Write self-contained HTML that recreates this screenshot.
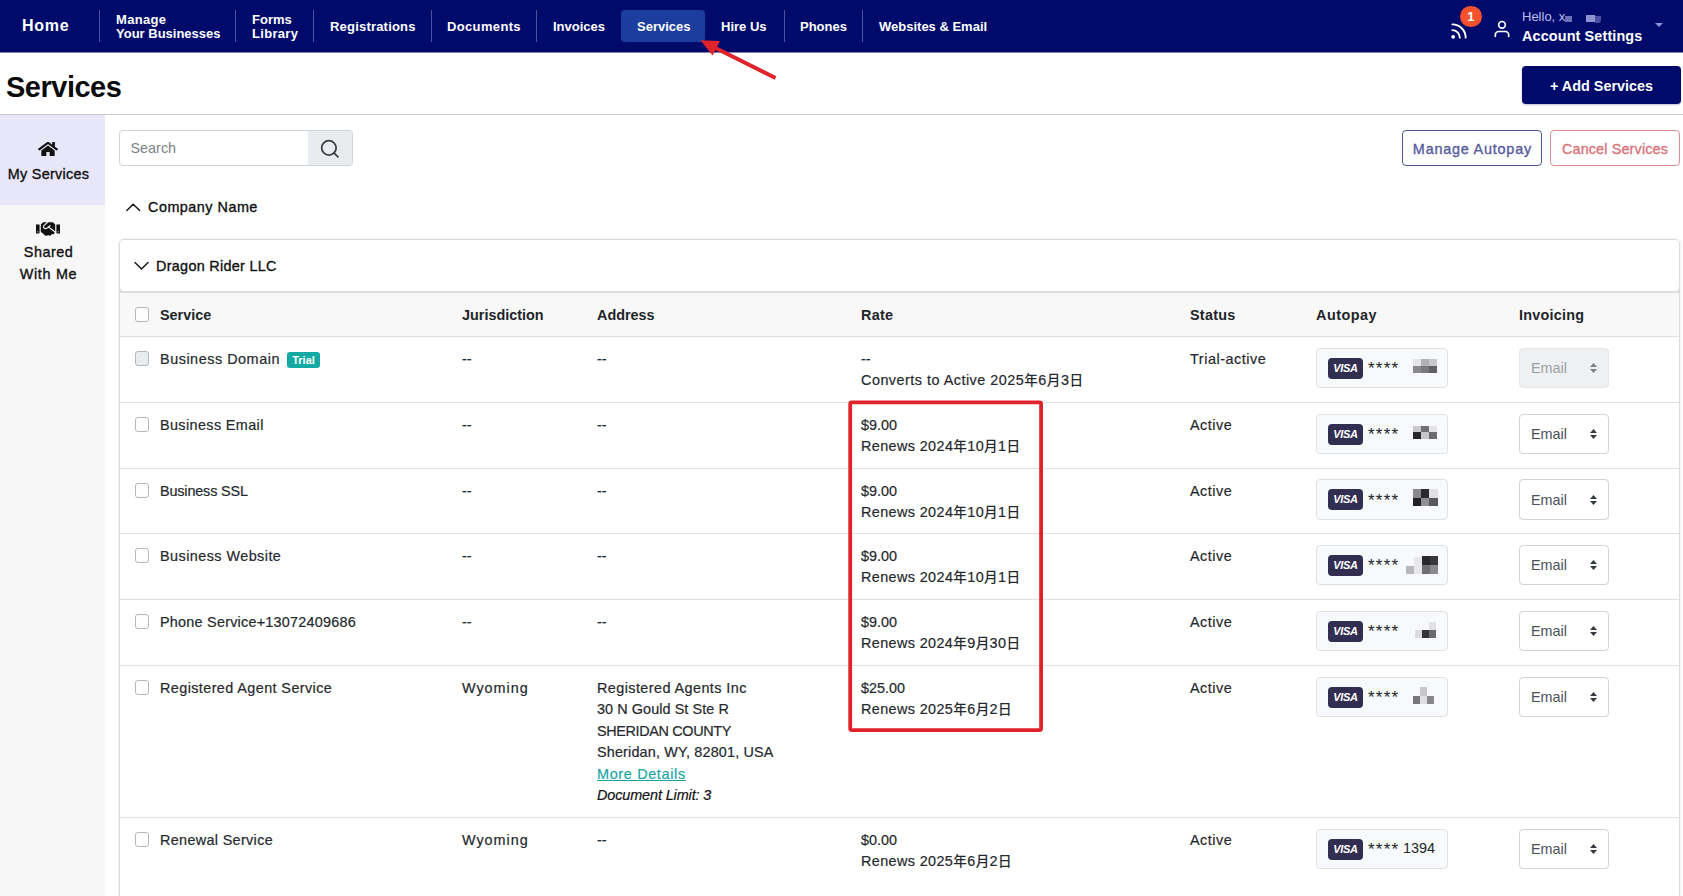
<!DOCTYPE html>
<html lang="en">
<head>
<meta charset="utf-8">
<title>Services</title>
<style>
*{box-sizing:border-box}
html,body{margin:0;padding:0}
body{width:1683px;height:896px;overflow:hidden;position:relative;background:#fff;color:#212529;
  font-family:"Liberation Sans","Noto Sans CJK SC",sans-serif;font-size:14.4px;line-height:21.6px}
.abs{position:absolute}
/* ---------- top nav ---------- */
#nav{position:absolute;left:0;top:0;width:1683px;height:52px;background:#000a6b;color:#fff}
#navedge{position:absolute;left:0;top:52px;width:1683px;height:1px;background:#7f84b5}
#nav .it{position:absolute;top:1px;height:52px;font-weight:700;font-size:13px;line-height:14px;white-space:nowrap;display:flex;align-items:center}
#nav .dv{position:absolute;top:10px;width:1px;height:32px;background:#4b53a6}
#nav .pill{position:absolute;left:621px;top:10px;width:84px;height:32px;border-radius:4px;background:#1b3d9d}
/* ---------- page head ---------- */
#h1{position:absolute;left:6px;top:67px;letter-spacing:-.5px;font-size:29px;line-height:40px;font-weight:700;color:#0b0b0b;margin:0;white-space:nowrap}
#addbtn{position:absolute;left:1522px;top:66px;width:159px;height:38px;border-radius:4px;background:#000a6b;color:#fff;font-weight:700;font-size:14.4px;line-height:40px;text-align:center;box-shadow:0 1px 2px rgba(0,10,107,.25)}
#hr{position:absolute;left:0;top:114px;width:1683px;height:1px;background:#c9c9c9}
/* ---------- sidebar ---------- */
#side{position:absolute;left:0;top:115px;width:105px;height:781px;background:#f7f7f7}
#side .act{position:absolute;left:0;top:0;width:105px;height:90px;background:#e8e7fa}
#side .lbl{position:absolute;left:0;width:97px;text-align:center;font-size:14.4px;line-height:22px;color:#111;white-space:nowrap;-webkit-text-stroke-width:.35px}
/* ---------- toolbar ---------- */
#search{position:absolute;left:119px;top:130px;width:234px;height:36px;border:1px solid #ced4da;border-radius:4px;background:#fff;overflow:hidden}
#search .ph{position:absolute;left:10.500px;top:7px;color:#7b838a;font-size:14.4px;line-height:21.6px}
#search .btn{position:absolute;left:188px;top:0;width:45px;height:34px;background:#e9ecef}
.obtn{position:absolute;top:130px;height:36px;border-radius:4px;border:1px solid;background:#fff;font-size:14.4px;line-height:36px;text-align:center;white-space:nowrap;-webkit-text-stroke-width:.35px}

/* ---------- company name / card ---------- */
#coname{position:absolute;left:148px;top:197px;font-size:14.4px;line-height:21.6px;color:#111;white-space:nowrap;letter-spacing:.49px;-webkit-text-stroke-width:.35px}
#card{position:absolute;left:119px;top:239px;width:1561px;height:700px;border:1px solid #dcdcdc;border-radius:5px;background:#fff;box-shadow:0 0 3px rgba(0,0,0,.12)}
#card .cname{position:absolute;left:36px;top:15px;font-size:14.4px;line-height:22px;color:#111;white-space:nowrap;letter-spacing:.3px;-webkit-text-stroke-width:.35px}
#card .hb{position:absolute;left:0;top:46px;width:1559px;height:7px;background:#dcdcdc}
#card .chead{position:absolute;left:0;top:0;width:1559px;height:51px;background:#fff;border-radius:4px}
#card .thead{position:absolute;left:0;top:53px;width:1559px;height:43px;background:#f8f8f8}
#card .ln{position:absolute;left:0;width:1559px;height:1px;background:#dfe2e5}
#card .c{position:absolute;white-space:nowrap;color:#25292d;font-size:14.4px;line-height:21.6px;-webkit-text-stroke-width:.2px}
#card .th{font-weight:700;color:#212529;letter-spacing:0;-webkit-text-stroke:0}
#card .c a{color:#17a6a3;text-decoration:underline}
#card .c .cj{font-size:13.6px;font-weight:500;-webkit-text-stroke-width:0}
#card .c em{font-style:italic;color:#111}
.cb{position:absolute;width:14px;height:15px;border:1px solid #b3b8be;border-radius:3px;background:#fff}
.cb.dis{background:#e9ecef}
.trial{position:absolute;width:33px;height:16px;border-radius:3px;background:#14a9a3;color:#fff;font-weight:700;font-size:11px;line-height:16px;text-align:center}
.ap{position:absolute;left:1196px;width:132px;height:40px;border:1px solid #dee2e6;border-radius:4px;background:#f8f9fa}
.ap .visa{position:absolute;left:11px;top:9px;width:35px;height:21px;border-radius:4px;background:#322e52;color:#fff;font-weight:700;font-style:italic;font-size:11px;line-height:21px;text-align:center;letter-spacing:-.3px}
.ap .stars{position:absolute;left:51px;top:9px;font-size:17px;line-height:22px;color:#212529;letter-spacing:1.25px}
.ap .dg{position:absolute;left:86px;top:8px;font-size:14.4px;line-height:21.6px;color:#212529}
.ap i{position:absolute;display:block}
.sel{position:absolute;left:1399px;width:90px;height:40px;border:1px solid #ced4da;border-radius:4px;background:#fff;color:#495057}
.sel span{position:absolute;left:11px;top:9px;font-size:14.4px;line-height:21.6px}
.sel svg{position:absolute;left:70px;top:14px;fill:#343a40}
.sel.tall span{top:10px}
.sel.tall svg{top:15px}
.sel.dis{background:#eff0f2;color:#9aa0a6;border-color:#e4e6e9}
.sel.dis svg{fill:#7a8188}
</style>
</head>
<body>

<!-- ================= NAV ================= -->
<div id="nav">
  <div class="it" style="left:22px;top:0;font-size:16px;letter-spacing:.7px">Home</div>
  <div class="dv" style="left:99px"></div>
  <div class="it" style="left:116px"><span><span style="letter-spacing:.3px">Manage</span><br>Your Businesses</span></div>
  <div class="dv" style="left:235px"></div>
  <div class="it" style="left:252px"><span>Forms<br><span style="letter-spacing:.3px">Library</span></span></div>
  <div class="dv" style="left:313px"></div>
  <div class="it" style="left:330px;letter-spacing:.2px">Registrations</div>
  <div class="dv" style="left:431px"></div>
  <div class="it" style="left:447px;letter-spacing:.35px">Documents</div>
  <div class="dv" style="left:536px"></div>
  <div class="it" style="left:553px">Invoices</div>
  <div class="pill"></div>
  <div class="it" style="left:637px">Services</div>
  <div class="it" style="left:721px">Hire Us</div>
  <div class="dv" style="left:784px"></div>
  <div class="it" style="left:800px">Phones</div>
  <div class="dv" style="left:862px"></div>
  <div class="it" style="left:879px">Websites &amp; Email</div>

  <svg class="abs" style="left:1449px;top:21px" width="20" height="20" viewBox="0 0 24 24" fill="none" stroke="#fff" stroke-width="2.2" stroke-linecap="round" stroke-linejoin="round"><path d="M4 11a9 9 0 0 1 9 9"/><path d="M4 4a16 16 0 0 1 16 16"/><circle cx="5" cy="19" r="1.2" fill="#fff"/></svg>
  <div class="abs" style="left:1460px;top:5.5px;width:21.5px;height:21.5px;border-radius:50%;background:#f4512c;color:#fff;font-weight:700;font-size:13px;line-height:21px;text-align:center">1</div>
  <svg class="abs" style="left:1492px;top:19px" width="20" height="20" viewBox="0 0 24 24" fill="none" stroke="#fff" stroke-width="2" stroke-linecap="round" stroke-linejoin="round"><path d="M20 21v-2a4 4 0 0 0-4-4H8a4 4 0 0 0-4 4v2"/><circle cx="12" cy="7" r="4"/></svg>
  <div class="abs" style="left:1522px;top:9px;font-size:13px;line-height:16px;color:#b9bdf0;white-space:nowrap">Hello, x</div>
  <div class="abs" style="left:1565px;top:16px;width:7px;height:6px;background:#6a70b8"></div>
  <div class="abs" style="left:1586px;top:15px;width:9px;height:7px;background:#8f94d0"></div>
  <div class="abs" style="left:1595px;top:16px;width:6px;height:7px;background:#4a50a0;border-radius:0 0 3px 1px"></div>
  <div class="abs" style="left:1522px;top:27px;font-size:14.4px;line-height:18px;font-weight:700;color:#fff;white-space:nowrap;letter-spacing:.13px">Account Settings</div>
  <div class="abs" style="left:1655px;top:23px;width:0;height:0;border-left:4px solid transparent;border-right:4px solid transparent;border-top:4px solid #8d93da"></div>
</div>
<div id="navedge"></div>

<!-- ================= PAGE HEAD ================= -->
<h1 id="h1">Services</h1>
<div id="addbtn">+ Add Services</div>
<div id="hr"></div>

<!-- ================= SIDEBAR ================= -->
<div id="side">
  <div class="act"></div>

  <svg class="abs" style="left:38px;top:26px" width="20" height="16" viewBox="0 0 576 512" preserveAspectRatio="none"><path fill="#111" d="M280.37 148.26L96 300.11V464a16 16 0 0 0 16 16l112.06-.29a16 16 0 0 0 15.92-16V368a16 16 0 0 1 16-16h64a16 16 0 0 1 16 16v95.640a16 16 0 0 0 16 16.050L464 480a16 16 0 0 0 16-16V300L295.670 148.260a12.190 12.190 0 0 0-15.300 0zM571.600 251.470L488 182.560V44.050a12 12 0 0 0-12-12h-56a12 12 0 0 0-12 12v72.610L318.470 43a48 48 0 0 0-61 0L4.340 251.470a12 12 0 0 0-1.600 16.900l25.500 31A12 12 0 0 0 45.150 301l235.220-193.740a12.190 12.190 0 0 1 15.300 0L530.900 301a12 12 0 0 0 16.900-1.600l25.500-31a12 12 0 0 0-1.700-16.930z"/></svg>
  <svg class="abs" style="left:36px;top:105px" width="24" height="18" viewBox="0 0 640 512" preserveAspectRatio="none"><path fill="#111" d="M434.700 64h-85.900c-8 0-15.700 3-21.600 8.400l-98.300 90c-.1.100-.2.300-.3.400-16.600 15.600-16.300 40.500-2.100 56 12.700 13.900 39.400 17.600 56.100 2.700.1-.1.300-.1.400-.2l79.900-73.200c6.500-5.900 16.700-5.500 22.600 1 6 6.500 5.500 16.600-1 22.600l-26.100 23.900L504 313.800c2.900 2.400 5.500 5 7.900 7.700V128l-54.600-54.600c-5.900-6-14.100-9.400-22.600-9.400zM544 128.200v223.900c0 17.700 14.300 32 32 32h64V128.200h-96zm48 223.900c-8.800 0-16-7.200-16-16s7.200-16 16-16 16 7.200 16 16-7.200 16-16 16zM0 384h64c17.700 0 32-14.300 32-32V128.200H0V384zm48-63.900c8.800 0 16 7.200 16 16s-7.200 16-16 16-16-7.200-16-16c0-8.900 7.200-16 16-16zm435.900 18.600L334.600 217.500l-30 27.500c-29.700 27.100-75.200 24.500-101.700-4.400-26.900-29.400-24.800-74.900 4.400-101.700L289.100 64h-83.800c-8.500 0-16.600 3.400-22.600 9.400L128 128v223.900h18.300l90.500 81.900c27.400 22.300 67.700 18.100 90-9.300l.2-.2 17.900 15.500c15.900 13 39.400 10.500 52.300-5.400l31.400-38.600 5.400 4.400c13.700 11.100 33.900 9.100 45-4.700l9.500-11.700c11.200-13.800 9.100-33.900-4.600-45.100z"/></svg>
  <div class="lbl" style="top:48px;letter-spacing:.27px">My Services</div>
  <div class="lbl" style="top:126px"><span style="letter-spacing:.48px">Shared</span><br><span style="letter-spacing:.68px">With Me</span></div>
</div>

<!-- ================= TOOLBAR ================= -->
<div id="search"><span class="ph">Search</span><div class="btn"><svg class="abs" style="left:11.200px;top:6.700px" width="21.600" height="21.600" viewBox="0 0 24 24" fill="none" stroke="#3a4046" stroke-width="2" stroke-linecap="round" stroke-linejoin="round"><circle cx="11" cy="11" r="8"/><line x1="21" y1="21" x2="16.650" y2="16.650"/></svg></div></div>
<div class="obtn" style="left:1402px;width:140px;color:#565b9c;border-color:#4d5392;letter-spacing:.79px;text-indent:.8px">Manage Autopay</div>
<div class="obtn" style="left:1550px;width:130px;color:#d8757a;border-color:#dc8c90;letter-spacing:.14px">Cancel Services</div>


<!-- ================= COMPANY NAME ================= -->
<svg class="abs" style="left:125px;top:202px" width="16" height="10" viewBox="0 0 16 10" fill="none" stroke="#111" stroke-width="1.4" stroke-linecap="round" stroke-linejoin="round"><path d="M1.800 8.600L8.200 2.200L14.600 8.600"/></svg>
<div id="coname">Company Name</div>

<!--TABLE-->
<div id="card">
<div class="hb"></div><div class="chead"></div><div class="thead"></div>
<svg class="abs" style="left:14px;top:21px" width="15" height="10" viewBox="0 0 15 10" fill="none" stroke="#111" stroke-width="1.4" stroke-linecap="round" stroke-linejoin="round"><path d="M1 1.500L7.500 8L14 1.500"/></svg>
<div class="cname">Dragon Rider LLC</div>
<div class="cb" style="left:15px;top:67px"></div>
<div class="c th" style="left:40px;top:65px"><span style="letter-spacing:0px">Service</span></div>
<div class="c th" style="left:342px;top:65px"><span style="letter-spacing:0px">Jurisdiction</span></div>
<div class="c th" style="left:477px;top:65px"><span style="letter-spacing:0px">Address</span></div>
<div class="c th" style="left:741px;top:65px"><span style="letter-spacing:0.3px">Rate</span></div>
<div class="c th" style="left:1070px;top:65px"><span style="letter-spacing:0.25px">Status</span></div>
<div class="c th" style="left:1196px;top:65px"><span style="letter-spacing:0.5px">Autopay</span></div>
<div class="c th" style="left:1399px;top:65px"><span style="letter-spacing:0.25px">Invoicing</span></div>
<div class="ln" style="top:96px"></div>
<div class="cb dis" style="left:15px;top:111px"></div>
<div class="c" style="left:40px;top:109px"><span style="letter-spacing:0.53px">Business Domain</span></div>
<div class="c" style="left:342px;top:109px"><span style="letter-spacing:0px">--</span></div>
<div class="c" style="left:477px;top:109px"><span style="letter-spacing:0px">--</span></div>
<div class="c" style="left:741px;top:109px;line-height:21px"><span style="letter-spacing:0px">--</span><br><span style="letter-spacing:0.49px">Converts to Active 2025<b class="cj">年</b>6<b class="cj">月</b>3<b class="cj">日</b></span></div>
<div class="c" style="left:1070px;top:109px"><span style="letter-spacing:0.545px">Trial-active</span></div>
<div class="trial" style="left:167px;top:112px">Trial</div>
<div class="ap" style="top:108px"><span class="visa">VISA</span><span class="stars">****</span><i style="left:96px;top:10px;width:8px;height:7px;background:#e6e6e9"></i><i style="left:104px;top:10px;width:8px;height:7px;background:#b2b2b6"></i><i style="left:112px;top:10px;width:8px;height:7px;background:#c8c8cc"></i><i style="left:96px;top:17px;width:8px;height:7px;background:#8a8a8e"></i><i style="left:104px;top:17px;width:8px;height:7px;background:#7a7a7e"></i><i style="left:112px;top:17px;width:8px;height:7px;background:#606064"></i></div>
<div class="sel dis" style="top:108px"><span>Email</span><svg width="7" height="10" viewBox="0 0 7 10"><path d="M0 4L3.500 0L7 4zM0 6L3.500 10L7 6z"/></svg></div>
<div class="ln" style="top:162px"></div>
<div class="cb" style="left:15px;top:177px"></div>
<div class="c" style="left:40px;top:175px"><span style="letter-spacing:0.385px">Business Email</span></div>
<div class="c" style="left:342px;top:175px"><span style="letter-spacing:0px">--</span></div>
<div class="c" style="left:477px;top:175px"><span style="letter-spacing:0px">--</span></div>
<div class="c" style="left:741px;top:175px;line-height:21px"><span style="letter-spacing:0px">$9.00</span><br><span style="letter-spacing:0.39px">Renews 2024<b class="cj">年</b>10<b class="cj">月</b>1<b class="cj">日</b></span></div>
<div class="c" style="left:1070px;top:175px"><span style="letter-spacing:0.52px">Active</span></div>
<div class="ap" style="top:174px"><span class="visa">VISA</span><span class="stars">****</span><i style="left:96px;top:11px;width:8px;height:6px;background:#c8c8cc"></i><i style="left:104px;top:11px;width:8px;height:6px;background:#707074"></i><i style="left:112px;top:11px;width:8px;height:6px;background:#e4e4e6"></i><i style="left:96px;top:17px;width:8px;height:7px;background:#25252a"></i><i style="left:104px;top:17px;width:8px;height:7px;background:#c8c8cc"></i><i style="left:112px;top:17px;width:8px;height:7px;background:#6a6a6e"></i></div>
<div class="sel" style="top:174px"><span>Email</span><svg width="7" height="10" viewBox="0 0 7 10"><path d="M0 4L3.500 0L7 4zM0 6L3.500 10L7 6z"/></svg></div>
<div class="ln" style="top:228px"></div>
<div class="cb" style="left:15px;top:243px"></div>
<div class="c" style="left:40px;top:241px"><span style="letter-spacing:-0.15px">Business SSL</span></div>
<div class="c" style="left:342px;top:241px"><span style="letter-spacing:0px">--</span></div>
<div class="c" style="left:477px;top:241px"><span style="letter-spacing:0px">--</span></div>
<div class="c" style="left:741px;top:241px;line-height:21px"><span style="letter-spacing:0px">$9.00</span><br><span style="letter-spacing:0.39px">Renews 2024<b class="cj">年</b>10<b class="cj">月</b>1<b class="cj">日</b></span></div>
<div class="c" style="left:1070px;top:241px"><span style="letter-spacing:0.52px">Active</span></div>
<div class="ap" style="top:239px;height:41px"><span class="visa" style="top:9px">VISA</span><span class="stars" style="top:10px">****</span><i style="left:96px;top:9px;width:8px;height:9px;background:#8a8a8c"></i><i style="left:104px;top:9px;width:8px;height:9px;background:#2a2a2e"></i><i style="left:112px;top:9px;width:9px;height:9px;background:#e0e0e2"></i><i style="left:96px;top:18px;width:8px;height:8px;background:#222226"></i><i style="left:104px;top:18px;width:8px;height:8px;background:#909094"></i><i style="left:112px;top:18px;width:9px;height:8px;background:#58585c"></i></div>
<div class="sel tall" style="top:239px;height:41px"><span>Email</span><svg width="7" height="10" viewBox="0 0 7 10"><path d="M0 4L3.500 0L7 4zM0 6L3.500 10L7 6z"/></svg></div>
<div class="ln" style="top:293px"></div>
<div class="cb" style="left:15px;top:308px"></div>
<div class="c" style="left:40px;top:306px"><span style="letter-spacing:0.45px">Business Website</span></div>
<div class="c" style="left:342px;top:306px"><span style="letter-spacing:0px">--</span></div>
<div class="c" style="left:477px;top:306px"><span style="letter-spacing:0px">--</span></div>
<div class="c" style="left:741px;top:306px;line-height:21px"><span style="letter-spacing:0px">$9.00</span><br><span style="letter-spacing:0.39px">Renews 2024<b class="cj">年</b>10<b class="cj">月</b>1<b class="cj">日</b></span></div>
<div class="c" style="left:1070px;top:306px"><span style="letter-spacing:0.52px">Active</span></div>
<div class="ap" style="top:305px"><span class="visa">VISA</span><span class="stars">****</span><i style="left:89px;top:20px;width:8px;height:8px;background:#b8b8bc"></i><i style="left:97px;top:11px;width:8px;height:17px;background:#e8e8ea"></i><i style="left:105px;top:10px;width:8px;height:9px;background:#2a2a2e"></i><i style="left:113px;top:10px;width:8px;height:9px;background:#38383c"></i><i style="left:105px;top:19px;width:8px;height:9px;background:#707074"></i><i style="left:113px;top:19px;width:8px;height:9px;background:#8a8a8e"></i></div>
<div class="sel" style="top:305px"><span>Email</span><svg width="7" height="10" viewBox="0 0 7 10"><path d="M0 4L3.500 0L7 4zM0 6L3.500 10L7 6z"/></svg></div>
<div class="ln" style="top:359px"></div>
<div class="cb" style="left:15px;top:374px"></div>
<div class="c" style="left:40px;top:372px"><span style="letter-spacing:0.24px">Phone Service+13072409686</span></div>
<div class="c" style="left:342px;top:372px"><span style="letter-spacing:0px">--</span></div>
<div class="c" style="left:477px;top:372px"><span style="letter-spacing:0px">--</span></div>
<div class="c" style="left:741px;top:372px;line-height:21px"><span style="letter-spacing:0px">$9.00</span><br><span style="letter-spacing:0.385px">Renews 2024<b class="cj">年</b>9<b class="cj">月</b>30<b class="cj">日</b></span></div>
<div class="c" style="left:1070px;top:372px"><span style="letter-spacing:0.52px">Active</span></div>
<div class="ap" style="top:371px"><span class="visa">VISA</span><span class="stars">****</span><i style="left:112px;top:10px;width:7px;height:8px;background:#e2e2e4"></i><i style="left:98px;top:18px;width:7px;height:8px;background:#dcdcde"></i><i style="left:105px;top:18px;width:7px;height:8px;background:#333338"></i><i style="left:112px;top:18px;width:7px;height:8px;background:#6a6a6e"></i></div>
<div class="sel" style="top:371px"><span>Email</span><svg width="7" height="10" viewBox="0 0 7 10"><path d="M0 4L3.500 0L7 4zM0 6L3.500 10L7 6z"/></svg></div>
<div class="ln" style="top:425px"></div>
<div class="cb" style="left:15px;top:440px"></div>
<div class="c" style="left:40px;top:438px"><span style="letter-spacing:0.41px">Registered Agent Service</span></div>
<div class="c" style="left:342px;top:438px"><span style="letter-spacing:0.98px">Wyoming</span></div>
<div class="c" style="left:477px;top:438px;line-height:21.4px"><span style="letter-spacing:0.43px">Registered Agents Inc</span><br><span style="letter-spacing:0.08px">30 N Gould St Ste R</span><br><span style="letter-spacing:-0.34px">SHERIDAN COUNTY</span><br><span style="letter-spacing:0.17px">Sheridan, WY, 82801, USA</span><br><span style="letter-spacing:0.67px"><a>More Details</a></span><br><span style="letter-spacing:-0.1px"><em>Document Limit: 3</em></span></div>
<div class="c" style="left:741px;top:438px;line-height:21px"><span style="letter-spacing:0px">$25.00</span><br><span style="letter-spacing:0.385px">Renews 2025<b class="cj">年</b>6<b class="cj">月</b>2<b class="cj">日</b></span></div>
<div class="c" style="left:1070px;top:438px"><span style="letter-spacing:0.52px">Active</span></div>
<div class="ap" style="top:437px"><span class="visa">VISA</span><span class="stars">****</span><i style="left:103px;top:9px;width:7px;height:9px;background:#c8c8cc"></i><i style="left:96px;top:18px;width:7px;height:8px;background:#78787c"></i><i style="left:103px;top:18px;width:7px;height:8px;background:#e0e0e2"></i><i style="left:110px;top:18px;width:7px;height:8px;background:#88888c"></i></div>
<div class="sel" style="top:437px"><span>Email</span><svg width="7" height="10" viewBox="0 0 7 10"><path d="M0 4L3.500 0L7 4zM0 6L3.500 10L7 6z"/></svg></div>
<div class="ln" style="top:577px"></div>
<div class="cb" style="left:15px;top:592px"></div>
<div class="c" style="left:40px;top:590px"><span style="letter-spacing:0.335px">Renewal Service</span></div>
<div class="c" style="left:342px;top:590px"><span style="letter-spacing:0.98px">Wyoming</span></div>
<div class="c" style="left:477px;top:590px"><span style="letter-spacing:0px">--</span></div>
<div class="c" style="left:741px;top:590px;line-height:21px"><span style="letter-spacing:0px">$0.00</span><br><span style="letter-spacing:0.385px">Renews 2025<b class="cj">年</b>6<b class="cj">月</b>2<b class="cj">日</b></span></div>
<div class="c" style="left:1070px;top:590px"><span style="letter-spacing:0.52px">Active</span></div>
<div class="ap" style="top:589px"><span class="visa">VISA</span><span class="stars">****</span><span class="dg">1394</span></div>
<div class="sel" style="top:589px"><span>Email</span><svg width="7" height="10" viewBox="0 0 7 10"><path d="M0 4L3.500 0L7 4zM0 6L3.500 10L7 6z"/></svg></div>
</div>
<!--/TABLE-->

<!-- ================= ANNOTATIONS ================= -->
<svg class="abs" style="left:0;top:0;pointer-events:none" width="1683" height="896" viewBox="0 0 1683 896">
  <rect x="850.200" y="402.400" width="190.900" height="327.700" rx="1.500" fill="none" stroke="#e0222b" stroke-width="3.800"/>
  <line x1="775.500" y1="78" x2="712" y2="46.200" stroke="#e0222b" stroke-width="4" stroke-linecap="butt"/>
  <path d="M700.500 40.300L720 41L712.600 55.400z" fill="#e0222b"/>
</svg>
</body>
</html>
